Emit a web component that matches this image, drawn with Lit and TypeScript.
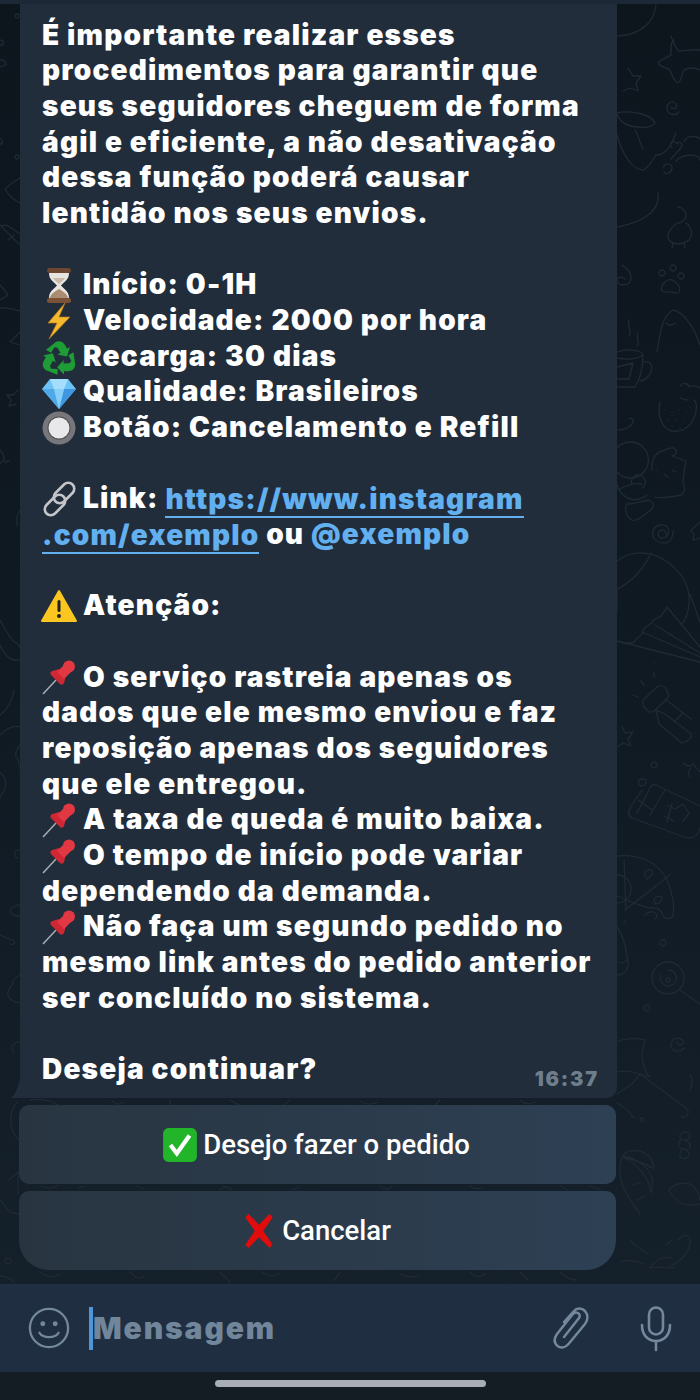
import { LitElement, html, css, svg } from "lit";
import { customElement } from "lit/decorators.js";

const arrow = svg`<path d="M13 3.500c1.500-1.800 4-2.500 6.500-2 2.500.5 3.500 2 4.500 3.500l2 3.500 3-1.500-3 9.500-9.500-2 3-1.700-3-5-3-.5-3.500 5.500-5-3z"/>`;
const emoji: Record<string, any> = {
  hourglass: svg`<svg class="e" viewBox="0 0 36 36"><path d="M8 6h20c0 7-5 9-8 12.500 3 3.500 8 5.500 8 12.500H8c0-7 5-9 8-12.500C13 15 8 13 8 6z" fill="#e8e5e0"/><path d="M9 31c1-5 6-7 9-9 3 2 8 4 9 9z" fill="#a98c72"/><path d="M12 11h12c-1 2-4 4-6 6-2-2-5-4-6-6z" fill="#c9bbab"/><rect x="6" y="1" width="24" height="5" rx="2.500" fill="#6d4730"/><rect x="6" y="31" width="24" height="5" rx="2.500" fill="#7a5237"/></svg>`,
  bolt: svg`<svg class="e" viewBox="0 0 36 36"><path d="M24 0 7 20h9L8 36l21-22H18z" fill="#f5b92e" stroke="#b9791a" stroke-width=".7"/></svg>`,
  recycle: svg`<svg class="e" viewBox="0 0 36 36"><g fill="#1e9c35" transform="translate(0 1)">${arrow}<g transform="rotate(120 18 19)">${arrow}</g><g transform="rotate(240 18 19)">${arrow}</g></g></svg>`,
  gem: svg`<svg class="e" viewBox="0 0 36 36"><path d="M9 5h18l8 10-17 20L1 15z" fill="#6dc3f5"/><path d="M9 5l4 10h10l4-10z" fill="#a5defc"/><path d="M1 15h12l5 20z" fill="#4fa9e8"/><path d="M23 15h12L18 35z" fill="#3f97df"/><path d="M13 15h10l-5 20z" fill="#86d0f8"/></svg>`,
  button: svg`<svg class="e" viewBox="0 0 36 36"><circle cx="18" cy="18" r="16.500" fill="#77777b"/><circle cx="18" cy="18" r="11.500" fill="#4e4e52"/><circle cx="18" cy="18" r="10.500" fill="#e8e8ea"/></svg>`,
  link: svg`<svg class="e" viewBox="0 0 36 36" fill="none"><g stroke="#c4c5c9" stroke-width="2.600"><rect x="17" y="0" width="12" height="24" rx="6" transform="rotate(45 23 12)"/><rect x="8" y="12" width="12" height="24" rx="6" transform="rotate(45 14 24)"/></g></svg>`,
  warn: svg`<svg class="e" viewBox="0 0 36 36"><path d="M18 3 35 33H1z" fill="#fbc61f" stroke="#fbc61f" stroke-width="2" stroke-linejoin="round"/><rect x="16.500" y="12" width="3" height="12" rx="1.500" fill="#222"/><circle cx="18" cy="28" r="2" fill="#222"/></svg>`,
  pin: svg`<svg class="e" viewBox="0 0 36 36"><path d="M2 35 15 21" stroke="#a9adb3" stroke-width="1.500"/><path d="M11 12c3-1 5-1 7-2l7 7c-1 2-1 4-2 7-1 2-3 2-4 1L10 16c-1-1-1-3 1-4z" fill="#cf2733"/><path d="M16 13 24 5l7 7-8 8z" fill="#e23843"/><circle cx="28" cy="7.500" r="6" fill="#e23843"/></svg>`,
  check: svg`<svg class="e" viewBox="0 0 36 36"><rect x="2" y="2" width="32" height="32" rx="5" fill="#22b52a"/><path d="M9 18l6 8 12-17" fill="none" stroke="#fff" stroke-width="4"/></svg>`,
  cross: svg`<svg class="e" viewBox="0 0 36 36"><path d="M5 5 8 2 18 12 28 2l3 3-9 13 9 13-3 3-10-10L8 34l-3-3 9-13z" fill="#e20c0c"/></svg>`,
};

const art = [
  "M656 5c-2 18-16 30-39 31",
  "M671 36c3 9 5 13 8 15 6 0 14-2 21-1M700 70c-6-3-12-2-16 0-3 6-3 12-6 13-4-2-7-10-8-13-4-2-11-4-12-7 4-5 11-6 13-8 0-6-1-12 3-15",
  "M628 68l5 8 8 0-5 7 2 8-8-3-7 3",
  "M671 107a3 3 0 1 0 4-4c-4-3-8 1-8 5 0 6 8 9 12 4",
  "M617 113c14-3 34 1 38 10-3 5-10 5-18 4-10-1-18-4-20-14M617 135c5 18 14 35 27 35 5-4 9-10 12-15 8 0 14-6 20-22M635 130c4 6 5 14 8 19",
  "M676 161c6-7 22-8 24-1M672 148c-5-5 3-9 5-4 3-4 7 0 3 5l-9 10M664 168c-2-5 8-6 8 0 0 4-6 8-8 4M684 142c3-7 12-7 16-3",
  "M658 193c2 14-8 28-41 34",
  "M678 207a8 8 0 1 1 0 16c-8 4-12 12-9 17 5 6 15 4 20 0 4-5 3-13-3-17M673 243l-1 5M684 243l1 5",
  "M622 265c12 8 12 20 0 20-4 0-5-4-5-6 2-3 6-2 8 0",
  "M668 280c-5 2-8 8-6 11 3 3 6 0 9 1 3 0 6 3 8 0 3-5-5-14-11-12zM662 270a3 3 0 1 0 .1 0M673 265a3 3 0 1 0 .1 0M681 273a3 3 0 1 0 .1 0",
  "M657 352c3-15 3-34 16-42 12 2 22 20 27 35M666 323c3 3 6 3 9 0",
  "M629 320c-3 6 4 9 0 16M638 333c-3 5 3 8-1 13",
  "M617 352c10-4 25-2 26 3 0 10-2 22-8 32h-18M617 358c10 2 20 1 26-3M643 362c7-2 10 3 8 10-2 5-7 9-11 9M617 367l16-4-4 16h-12",
  "M680 386c4-4 8-3 9 1 4-2 8-1 11 1M688 400c-3 0-5-1-8-2",
  "M660 402c-3 14 2 27 12 29 13 2 22-8 24-20 1-5 0-9-2-11",
  "M665 410h.1M672 412h.1M679 410h.1M686 413h.1M668 420h.1M676 420h.1M684 421h.1M672 426h.1M680 428h.1M690 407h.1",
  "M618 430c8 0 14-4 15-8 1-3-2-5-4-3",
  "M652 470c-1-10 4-18 10-19 4-1 6-4 12-3 4 2 3 7-2 8l14 5c-1 5-2 12-3 20 1 6 4 9-2 14-10 2-20 4-26 2",
  "M657 470h.1M664 474l4 3M672 470l4 2",
  "M617 448a18 18 0 1 1 0 24M617 490c10-3 12-8 25-6M617 485c6 16 20 18 30 10M632 520c-6-4-8-10-5-16 6 0 15-3 22-4 8 4 4 9-2 13-5 3-10 9-15 7z",
  "M632 485a7 7 0 1 1 10 3",
  "M666 535a4 4 0 1 0 -4 3c6 0 8-6 6-10-3-5-13-4-15 3-2 7 4 12 11 12 6 0 9-5 9-12",
  "M700 522c-3 3-6 5-9 8 0 2 2 3 3 4l-1 6 7-2",
  "M617 561c14-11 32-10 46-2 16 10 28 25 26 46-1 8-4 16-8 20M651 553c-6 14-20 30-34 36M617 589v22M626 644l-9-3M690 594l10 28M667 607c-2 6-4 4-6 9-4 4-8 1-9 7-6 3-9 6-10 11-5 4-6 5-9 9-3 0-5 0-7 0M667 607l33 40M655 625l45 28M642 632l58 25M617 641l83 21",
  "M654 663h.1M654 672v5M641 681l3 4M633 695l5 2M620 696h.1",
  "M644 699l14-13c3-1 7 0 9 5 3 4 2 6 0 8l-13 12c-3 2-6 1-8-2-3-3-4-7-2-10zM656 710l9 4 25 19c3 3 0 6-3 8l-5 2-23-19zM665 699l26 20M674 722l9-9",
  "M622 726l3 7 8-1-5 7 3 7-8-3-6 4",
  "M654 762a3 3 0 1 0 .1 0M683 763c4 4 8 3 10 1l7 8M690 777c-3-3-2-6 1-9",
  "M646 780c-5-2-9-1-7 4 3 4 7 2 7-4zM642 790c-5 8-11 14-13 21-1 3 0 5 3 7l55 20c7 1 12-4 13-10M637 813l13-25c2-4 4-4 8-2l42 20M650 815l15-25M638 800l14 10M667 805l8 4 8-5 6 9-6 8M667 822l5-18M664 816l10 5",
  "M617 856c20-2 40 4 50 24 5 12 8 26 6 36-3 4-8 3-10-1-2-6-7-8-13-7-10-2-20-7-33-12M625 910l45-35M624 860l2 50",
  "M617 875a14 14 0 0 1 0 28M645 872c2-3 5-3 7-1 1 3-2 6-5 8-2-2-3-4-2-7zM655 898c3-2 6-3 7 0 0 3-3 6-6 6-2-2-3-4-1-6zM645 915c3-3 7-4 10-2 3 2 2 5 0 6",
  "M663 940a3 3 0 1 0 .1 0M626 920l-2 3M632 931h.1",
  "M617 927c6 8 9 20 10 30 2 5 2 10-2 15-3 3-6 3-8 3M617 962c5 2 8 1 10-2",
  "M668 962a16 16 0 1 1 0 32 16 16 0 1 1 0-32M668 970a8 8 0 1 1 -7 5M668 978a2 2 0 1 0 .1 0M680 990l20 14",
  "M647 1005a3 3 0 1 0 .1 0M677 1042a3 3 0 1 0 3 -3c-6-2-9 2-9 6 0 7 9 8 13 3",
  "M617 1042c8-4 18-4 28-2-3 8-4 18-1 27 2 6 3 8 6 10l-10-3c-8-3-15-4-23-2M640 1074l-8 10M632 1084l-15 10M640 1074l46 34c6 5-2 12-5 8M690 1090c3-6 2-12 0-16",
  "M642 1118a2 2 0 1 0 .1 0M617 1103c8 4 12 8 17 15",
  "M682 1133c3-2 8-1 8 3 0 3-3 4-6 4 5 1 7 4 6 8-2 1-4 2-6 1 5 2 6 5 4 8-2 2-6 2-8 0-1-4 1-6 3-8-3 0-5-3-4-7l3-3c-3-1-3-5 0-6z",
  "M622 1157c5-9 18-7 24-3 6 3 7 9 8 15-8-5-18-9-32-12zM622 1157c7-2 22 6 28 16 3 5 3 12 1 20-2-16-14-30-29-36M622 1158c-4 10-2 24 4 35 4 8 10 14 14 22M633 1185l8-3M637 1200l8-4",
  "M669 1190c4-6 14-8 21-6 5 2 7 7 9 12l1 4M669 1190c2 5 8 12 14 14 5 2 10 1 17 0M676 1190h.1",
  "M678 1240c8-8 12-4 12 2 0 10-10 20-20 24M672 1258c-8-2-16 2-22 10 8-2 16 0 24 0",
  "M630 1240c5 6 10 8 18 14M620 1262c8-3 16-1 24 2M672 1240l-6 5",
  "M30 1100c18-3 36 6 40 20M112 1100c4 6 8 4 12 2M170 1100v6M230 1100c4 3 8 5 14 6M290 1100l-6 5M360 1101c6 4 12 4 18 1M440 1100l-5 5M520 1100c5 5 10 4 16 2",
  "M40 1186c8 3 14 3 18-1M78 1188l7-2M136 1186l8 3M220 1190c4-4 8-4 12 0M300 1187l-8 3M380 1186c5 4 8 4 12 0M470 1186c4 3 8 4 14 1M560 1186l8 4M590 1186l10 4",
  "M40 1272c8 6 14 6 20 2M130 1272c6 6 10 8 14 4M220 1272l10 10M262 1272c8 5 12 5 18 1M340 1273l-6 7M400 1274c8 4 14 4 20 1M470 1272c6 6 10 6 16 1M520 1272l8 8M560 1272c6 5 10 8 16 8",
  "M17 14a2 2 0 1 0 .1 0M0 40c3 0 4 2 3 5l-3 0M0 60c4 0 6 2 6 5l-6 2",
  "M0 138c2 1 3 3 2 6l-2 0M17 155a2 2 0 1 0 .1 0M20 178c-6 3-12 8-15 11 3 6 10 12 15 14M0 225l20 20M2 226c2-1 4-1 6 0l12 8M8 240l6-5",
  "M0 285c3 3 6 7 8 10l-8 5M0 308c8-1 14 2 20 3M20 332l-10 10 10 3",
  "M18 390l-5 5-6 0 4 5-2 6 7-2M0 450c3 4 5 7 4 10l-4 3M9 461l-4 1M20 510l-3 6v10",
  "M0 620c4 8 8 14 12 20 4 3 8 4 8 8M0 645c6 12 10 16 20 15",
  "M14 690c-2 12-7 20-14 25M20 727c-6-2-12 0-20 8M20 745c-3 4-5 8-4 12 2 2 4 4 2 6 2 3 3 6 2 10",
  "M0 773c7 4 8 14 0 24M20 850a4 4 0 1 0 -2 8M20 905c-4 0-9 2-10 6 1 4 5 5 10 5M0 935l14 6c2 3-2 4-4 3",
  "M20 975c-4 2-8 6-8 10-4 4-6 10-2 14 3 3 6 3 10 4",
  "M20 1042c-8 0-10 6-6 10",
  "M18 1102c-6 4-8 14-7 24 2 8 6 12 8 14M9 1180l9-8v22M0 1200l10 12 9 2M8 1258a3 3 0 1 0 .1 0M0 1276c6 0 10 2 14 6",
];

@customElement("app-root")
export class AppRoot extends LitElement {
  static styles = css`
    :host { display: block; width: 700px; height: 1400px; font-family: Inter, Roboto, "Liberation Sans", sans-serif; }
    .screen { position: relative; width: 700px; height: 1400px; overflow: hidden; display: flex; flex-direction: column;
      background: linear-gradient(180deg, #0d151d 0%, #101a23 50%, #15212c 100%); }
    .art { position: absolute; left: 0; top: 0; width: 700px; height: 1400px; fill: none; stroke: #1f2a35; stroke-width: 1.300; stroke-linecap: round; stroke-linejoin: round; }
    .top { position: relative; height: 4px; background: #1c2835; flex: none; }
    .chat { position: relative; flex: 1; display: flex; flex-direction: column; padding: 0 84px 14px 19px; gap: 7px; }
    .bubble { position: relative; margin-left: 1px; width: 597px; box-sizing: border-box; height: 1094px; padding: 13.800px 0 0 22px;
      background: #212d3a; border-radius: 0 0 10px 0; color: #fff; font-weight: 900; font-size: 28px; line-height: 35.660px; letter-spacing: 1.190px; }
    .tail { position: absolute; left: -9px; bottom: 0; width: 9px; height: 18px; fill: #212d3a; }
    .line { height: 35.660px; white-space: pre; display: flex; align-items: center; }
    .e { width: 36px; height: 36px; flex: none; margin-right: 6px; margin-left: -1px; display: block; }
    .a { color: #62b0f0; }
    .u { color: #62b0f0; box-shadow: 0 2px 0 #62b0f0; line-height: 34px; }
    .time { position: absolute; right: 18px; bottom: 6px; font-size: 20px; line-height: 26px; color: #6f7e8d; font-weight: 900; letter-spacing: 1.800px; }
    .btn { width: 597px; height: 79px; flex: none; display: flex; align-items: center; justify-content: center; color: #fff; font-family: Roboto, sans-serif; font-size: 27.500px; font-weight: 500;
      background: linear-gradient(90deg, #283541, #2e4054); border-radius: 10px; }
    .btn.last { border-radius: 10px 10px 30px 30px; }
    .btn .e { margin: 0 4px 0 -4px; width: 38px; height: 38px; }
    .bar { position: relative; height: 88px; flex: none; background: #1f2e40; display: flex; align-items: center; padding: 0 28px 0 28px; color: #73889c; }
    .smile { width: 42px; height: 42px; flex: none; }
    .caret { width: 4px; height: 43px; background: #4e96d8; margin-left: 19px; flex: none; }
    .ph { font-size: 30px; font-weight: 900; color: #71869a; flex: 1; letter-spacing: 1.900px; }
    .clip { width: 36px; height: 42px; flex: none; margin-right: 51px; }
    .mic { width: 32px; height: 45px; flex: none; }
    .nav { position: relative; height: 28px; flex: none; background: #141c24; display: flex; justify-content: center; padding-top: 8px; box-sizing: border-box; }
    .home { width: 271px; height: 7px; border-radius: 4px; background: #a9adb6; }
    svg { overflow: visible; }
  `;

  private line(l: unknown) {
    return html`<div class="line">${l}</div>`;
  }
  private em(k: string, t: unknown) {
    return html`<div class="line">${emoji[k]}${t}</div>`;
  }

  render() {
    const plain = (s: string) => this.line(s);
    return html`<div class="screen">
      <svg class="art" viewBox="0 0 700 1400">
        ${art.map((d) => svg`<path d=${d}></path>`)}
      </svg>
      <div class="top"></div>
      <div class="chat">
        <div class="bubble">
          <svg class="tail" viewBox="0 0 9 18"><path d="M9 0v18H0c4-3 6-9 9-18z"/></svg>
          ${plain("É importante realizar esses")}
          ${plain("procedimentos para garantir que")}
          ${plain("seus seguidores cheguem de forma")}
          ${plain("ágil e eficiente, a não desativação")}
          ${plain("dessa função poderá causar")}
          ${plain("lentidão nos seus envios.")}
          ${plain(" ")}
          ${this.em("hourglass", "Início: 0-1H")}
          ${this.em("bolt", "Velocidade: 2000 por hora")}
          ${this.em("recycle", "Recarga: 30 dias")}
          ${this.em("gem", "Qualidade: Brasileiros")}
          ${this.em("button", "Botão: Cancelamento e Refill")}
          ${plain(" ")}
          ${this.em("link", html`Link:&nbsp;<span class="u">https://www.instagram</span>`)}
          ${this.line(html`<span class="u">.com/exemplo</span>&nbsp;ou&nbsp;<span class="a">@exemplo</span>`)}
          ${plain(" ")}
          ${this.em("warn", "Atenção:")}
          ${plain(" ")}
          ${this.em("pin", "O serviço rastreia apenas os")}
          ${plain("dados que ele mesmo enviou e faz")}
          ${plain("reposição apenas dos seguidores")}
          ${plain("que ele entregou.")}
          ${this.em("pin", "A taxa de queda é muito baixa.")}
          ${this.em("pin", "O tempo de início pode variar")}
          ${plain("dependendo da demanda.")}
          ${this.em("pin", "Não faça um segundo pedido no")}
          ${plain("mesmo link antes do pedido anterior")}
          ${plain("ser concluído no sistema.")}
          ${plain(" ")}
          ${plain("Deseja continuar?")}
          <div class="time">16:37</div>
        </div>
        <div class="btn">${emoji.check}Desejo fazer o pedido</div>
        <div class="btn last">${emoji.cross}Cancelar</div>
      </div>
      <div class="bar">
        <svg class="smile" viewBox="0 0 44 44" fill="none" stroke="#73889c" stroke-width="2.400" stroke-linecap="round">
          <circle cx="22" cy="22" r="20"/><circle cx="15.500" cy="17.500" r="1.400" fill="#73889c"/><circle cx="28.500" cy="17.500" r="1.400" fill="#73889c"/><path d="M12 27c4 6 16 6 20 0"/>
        </svg>
        <div class="caret"></div>
        <div class="ph">Mensagem</div>
        <svg class="clip" viewBox="0 0 36 42" fill="none" stroke="#73889c" stroke-width="2.500" stroke-linecap="round" stroke-linejoin="round">
          <path d="M11 30 26 11c1.500-2 .5-4-1-5-2-1-4-.5-5.500 1.500L4 27c-3.500 5-3 9 .5 12 3.500 2.500 8 1.500 11-2L32 17c3.500-4.500 3-9.500 0-13-3-3-8-3.500-11 0L11 15"/>
        </svg>
        <svg class="mic" viewBox="0 0 32 45" fill="none" stroke="#73889c" stroke-width="2.600" stroke-linecap="round">
          <rect x="9" y="1.500" width="14" height="27" rx="7"/><path d="M2 19c0 9 5 16 14 16s14-7 14-16M16 35v9"/>
        </svg>
      </div>
      <div class="nav"><div class="home"></div></div>
    </div>`;
  }
}
